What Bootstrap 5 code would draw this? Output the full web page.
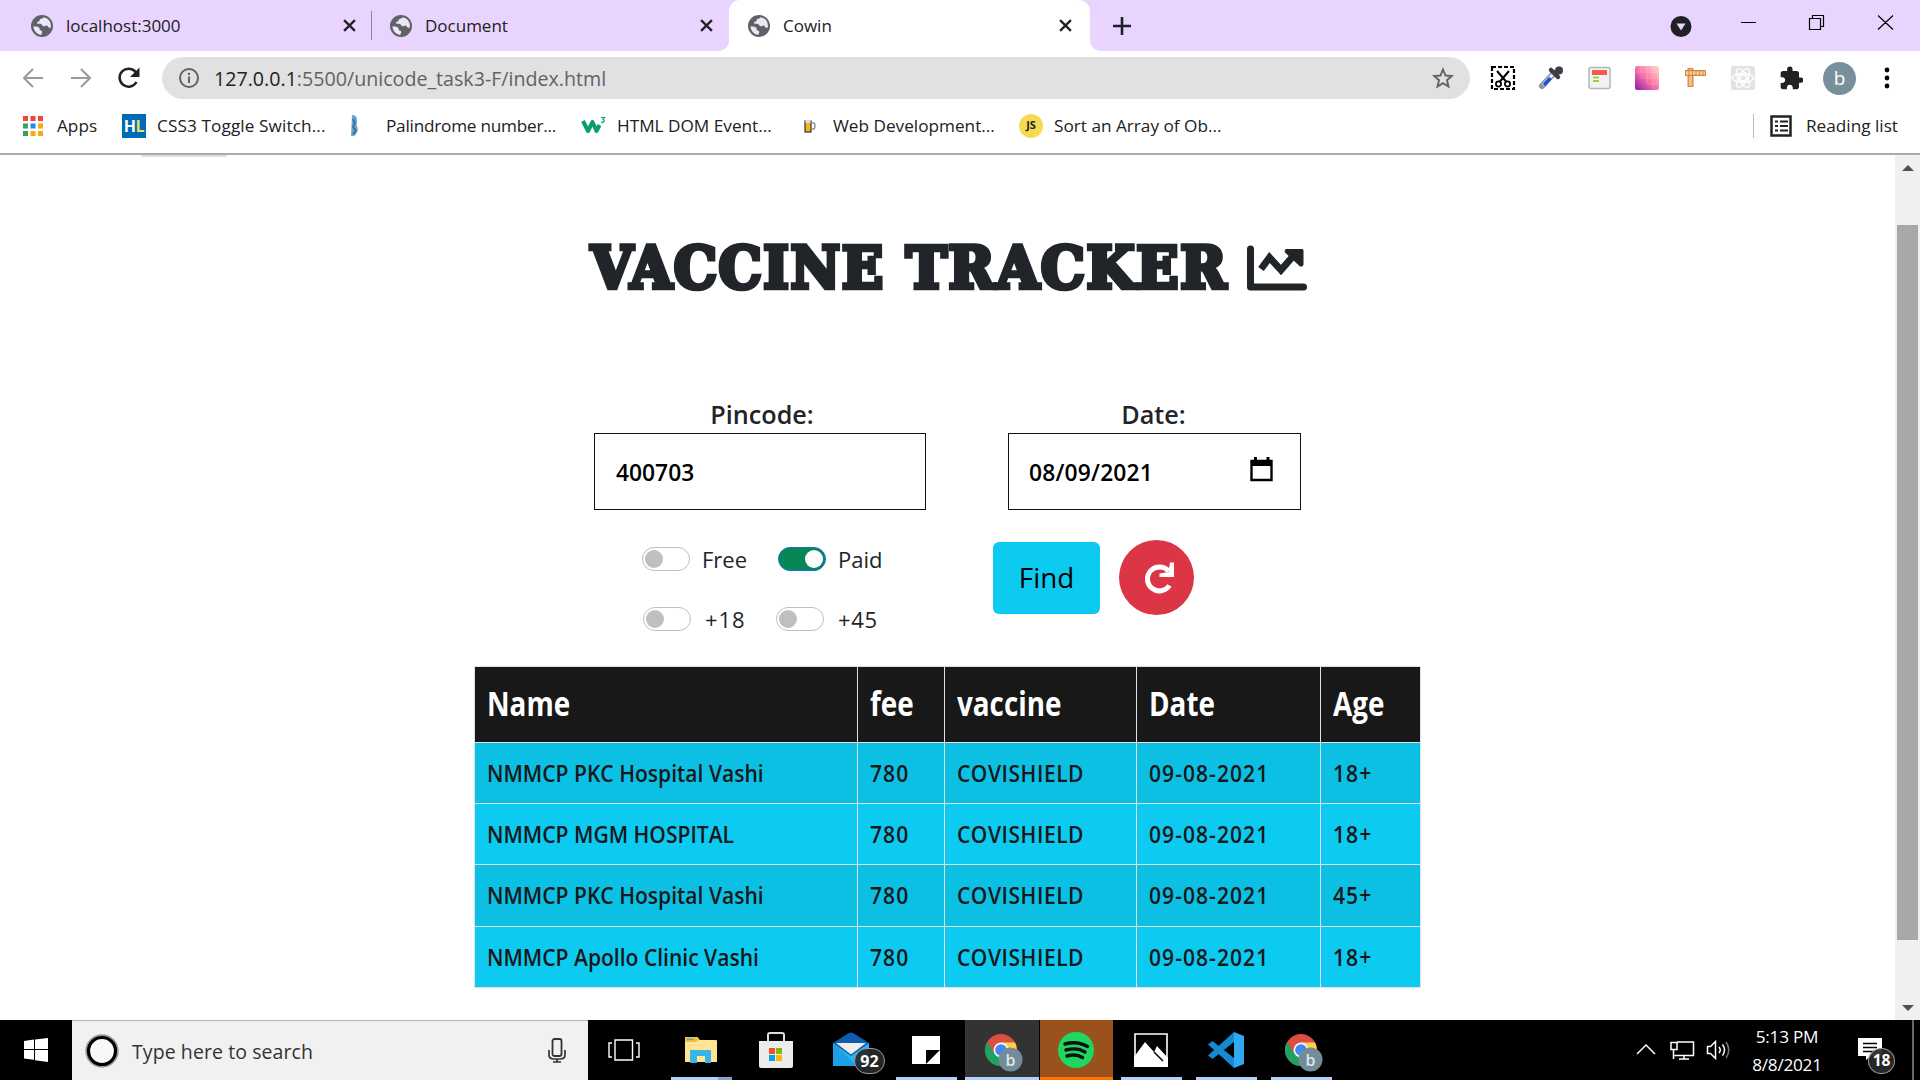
<!DOCTYPE html>
<html lang="en">
<head>
<meta charset="utf-8">
<title>Cowin</title>
<link href="https://cdn.jsdelivr.net/npm/bootstrap@5.3.0/dist/css/bootstrap.min.css" rel="stylesheet">
<style>
body{width:1920px;height:1080px;overflow:hidden;font-family:"Open Sans","Noto Sans",sans-serif;color:#202124;background:#fff}
svg{display:block;flex:none}
.tabstrip{height:51px;background:#e8d4ff;font-size:17px;padding-left:10px}
.tabitem{height:51px;width:357px;padding:0 16px 0 18px;flex:none}
.tabitem.first{width:362px;padding-left:21px;background:linear-gradient(#8f8599,#8f8599) right 0 center/1.5px 29px no-repeat}
.tabitem.on{background:#fff;border-radius:11px 11px 0 0;width:361px;padding:0 18px 0 19px;position:relative}
.tabitem.on::before,.tabitem.on::after{content:"";position:absolute;bottom:0;width:10px;height:10px}
.tabitem.on::before{left:-10px;background:radial-gradient(circle at 0 0,transparent 9.5px,#fff 10px)}
.tabitem.on::after{right:-10px;background:radial-gradient(circle at 100% 0,transparent 9.5px,#fff 10px)}
.tabitem span{margin-left:13px}
.toolbar{height:54px}
.omni{width:1308px;height:42px;border-radius:21px;background:#e1e1e1;font-size:19.65px;color:#5f6368;padding:0 16px;margin-left:21px}
.omni span{padding-top:1px;margin-left:14px}
.omni b{font-weight:400;color:#202124}
.ava{width:33px;height:33px;border-radius:50%;background:#78909c;color:#fff;font-size:19px}
.bookmarks{height:50px;font-size:17.2px;padding:0 22px 7px 23px;border-bottom:2px solid #ababab}
.bm{flex:none}
.hl{width:24px;height:24px;background:#006cb5;color:#fff;font-weight:700;font-size:16px;line-height:24px;text-align:center;letter-spacing:-.5px}
.hl i{font-style:normal;color:#ebe15c}
.js{width:24px;height:24px;border-radius:50%;background:#f7da52;font-weight:700;font-size:11px}
.viewport{height:865px}
.content{width:1895px}
.scroller{width:25px;background:#f0f0f0;padding:10px 0 9px}
.thumb{width:21px;height:715px;background:#a8a8a8;margin-top:54px}
.stub{width:86px;height:2px;background:#ddd;border-radius:0 0 4px 4px;margin-left:141px}
.tracker{width:947px;margin-left:474px}
.ttl text{font-family:"DejaVu Serif Condensed","DejaVu Serif",serif;font-weight:700;font-size:57.500px;letter-spacing:2px;fill:#212529;stroke:#212529;stroke-width:4.6px}
.lbl{font-size:25.2px;font-weight:600;line-height:38px;color:#212529}
.field{border:1.5px solid #111;height:77px;padding:4px 21px 0;font-size:22.8px;font-weight:600;color:#000}
.sw{width:48px;height:24px;border:1.5px solid #bfbfbf;border-radius:12px;padding:2px;flex:none}
.sw::before{content:"";display:block;width:18px;height:18px;border-radius:50%;background:#bfbfbf}
.sw.on{background:#078656;border-color:#1a6edc;padding-left:26px}
.sw.on::before{background:#fff}
.opt{font-size:22px;color:#212529;height:30px}
.opt span+span:not(.sw){padding-top:1px}
.findbtn{width:107px;height:72px;border-radius:6px;background:#0dcaf0;color:#000;font-size:27.8px;border:0;padding:0;margin-top:2px}
.resetbtn{width:75px;height:75px;border-radius:50%;background:#dc3545;border:0;padding:0;margin-left:19px}
.slots{width:947px;table-layout:fixed;border-collapse:collapse;margin:0;--bs-table-bg:transparent}
.slots th,.slots td{border:1.5px solid #dee2e6;padding:0 0 0 12px;vertical-align:middle;white-space:nowrap;box-shadow:none}
.slots th{background:#181818;color:#fff;height:75.5px;font-size:33.5px;font-weight:700;padding-bottom:2px}
.slots td{background:#0dcaf0;color:#17181a;height:61.4px;font-size:24.2px;font-weight:600}
.slots tr:nth-child(odd) td{background:#0cc0e4}
.slots span{display:inline-block;transform:scaleX(.87);transform-origin:0 50%}
.slots th span{transform:scaleX(.83)}
.slots td:nth-child(n+2) span{letter-spacing:1.2px}
.slots td:nth-child(3) span{letter-spacing:.6px}
.taskbar{height:60px;background:#000;color:#fff}
.search{width:516px;height:60px;background:#f1f1f1;border-top:1px solid #b5b5b5;color:#333;font-size:19.5px;padding:0 22px 0 13px}
.app{height:60px;flex:none;position:relative;display:flex;align-items:center;justify-content:center}
.app.run::after{content:"";position:absolute;left:0;right:0;bottom:0;height:3px;background:#b3d0f8}
.app.multi::after{background:linear-gradient(90deg,#b3d0f8 47px,#8aa3c4 47px)}
.count{position:absolute;border:1.5px solid #999;border-radius:50%;background:#262a2cee;color:#fff;font-weight:700;display:flex;align-items:center;justify-content:center}
.clock{font-size:17.2px;line-height:28px;letter-spacing:-.25px}
</style>
</head>
<body>
<svg width="0" height="0" class="position-absolute">
<defs>
<symbol id="globe" viewBox="2 2 20 20"><path fill="#5f6368" d="M12 2a10 10 0 1 0 0 20 10 10 0 0 0 0-20z"/><path fill="#eee5f8" d="M4.2 12.2c1.8.2 4.2.1 5.3 1.3.8.9-.2 1.7.8 2.3 1.400.6 2.200.7 1.800 2.300-.3 1-.8 1.300-.9 2.100A8.200 8.200 0 0 1 4.200 12.200zM13 4c-.2 1.500-1.500 1.200-2.500 1.700-1 .6-.2 1.800-1.500 2.300-1 .4-1.600.4-1.500 1.400.2 1 1.800.5 3 .6 1.800.1 1.500 1.900 3 2.200 1.400.3 1.800-1 3-.6 1 .4.8 1.700 2 1.900.5.1 1 0 1.500-.2C20.800 8.500 17.600 4.500 13 4z"/></symbol>
<symbol id="cross" viewBox="0 0 12 12"><path d="M1 1l10 10M11 1L1 11" stroke="#202124" stroke-width="2.100"/></symbol>
<symbol id="chrome" viewBox="0 0 40 40"><circle cx="17" cy="17" r="16" fill="#dc4e41"/><path d="M3.100 9A16 16 0 0 0 17 33l7-12-14-1z" fill="#1da261"/><path d="M17 9.500h14A16 16 0 0 1 17 33l7-12z" fill="#ffcf48"/><circle cx="17" cy="17" r="7.500" fill="#f5f5f5"/><circle cx="17" cy="17" r="5.800" fill="#4688f1"/><circle cx="26.500" cy="26.500" r="12" fill="#748c99"/><text x="26.500" y="32.500" text-anchor="middle" font-family="Open Sans" font-size="16" font-weight="600" fill="#dfe6ea">b</text></symbol>
</defs></svg>

<header>
<div class="tabstrip d-flex align-items-center">
  <div class="tabitem first d-flex align-items-center"><svg width="22" height="22"><use href="#globe"/></svg><span class="me-auto">localhost:3000</span><svg width="13" height="13"><use href="#cross"/></svg></div>
  <div class="tabitem d-flex align-items-center"><svg width="22" height="22"><use href="#globe"/></svg><span class="me-auto">Document</span><svg width="13" height="13"><use href="#cross"/></svg></div>
  <div class="tabitem on d-flex align-items-center"><svg width="22" height="22"><use href="#globe"/></svg><span class="me-auto">Cowin</span><svg width="13" height="13"><use href="#cross"/></svg></div>
  <svg width="18" height="18" style="margin-left:23px"><path d="M9 0v18M0 9h18" stroke="#202124" stroke-width="2.600"/></svg>
  <svg width="228" height="30" viewBox="1670 10 228 30" class="ms-auto" style="margin-right:22px"><circle cx="1681" cy="25.500" r="10.500" fill="#202124"/><path d="M1676.500 22.500h9l-4.500 7z" fill="#e8d4ff"/><path d="M1741 21.500h15M1809.500 17.500h11v11h-11zM1812.500 17v-2.500h11v11h-2.500M1878 14.500l15 14M1893 14.500l-15 14" stroke="#000" stroke-width="1.200" fill="none"/></svg>
</div>
<div class="toolbar d-flex align-items-center">
  <svg width="118" height="24" viewBox="23 66 118 24" style="margin-left:23px"><path d="M43 78H25M33 69l-9 9 9 9M71 78h18M81 69l9 9-9 9" stroke="#9a9a9a" stroke-width="2" fill="none"/><path d="M136 72.500A9 9 0 1 0 136.500 82" stroke="#202124" stroke-width="2.500" fill="none"/><path d="M139.500 67.500v9.500h-9.500z" fill="#202124"/></svg>
  <div class="omni d-flex align-items-center"><svg width="22" height="22"><circle cx="11" cy="11" r="9" stroke="#5f6368" stroke-width="2" fill="none"/><path d="M11 9.500V16M11 5.800V8" stroke="#5f6368" stroke-width="2"/></svg><span class="me-auto"><b>127.0.0.1</b>:5500/unicode_task3-F/index.html</span><svg width="22" height="22" viewBox="0 0 22 22"><path d="M11 2.500l2.500 6 6.300.5-4.800 4.200 1.500 6.300-5.500-3.400-5.500 3.400L7 13.200 2.200 9l6.300-.5z" fill="none" stroke="#5f6368" stroke-width="1.900"/></svg></div>
  <svg width="315" height="30" viewBox="1488 63 315 30" style="margin-left:18px">
    <path d="M1492 67h22v22h-22z" fill="none" stroke="#000" stroke-width="2.200" stroke-dasharray="4 2"/><path d="M1497 71l9.500 11M1509 71l-9.500 11" stroke="#000" stroke-width="2"/><circle cx="1498.500" cy="84" r="2.600" fill="none" stroke="#000" stroke-width="1.700"/><circle cx="1507.500" cy="84" r="2.600" fill="none" stroke="#000" stroke-width="1.700"/>
    <path d="M1542 86l12-13" stroke="#8d949c" stroke-width="6" stroke-linecap="round"/><path d="M1543 85l10-11" stroke="#e9eef6" stroke-width="3"/><path d="M1544 85l6.500-7" stroke="#244fd6" stroke-width="3.600"/><path d="M1551 70l7 7M1556 74l4-5" stroke="#3b3f44" stroke-width="4.500" stroke-linecap="round"/><circle cx="1559" cy="70.500" r="4" fill="#3b3f44"/>
    <rect x="1589" y="67.500" width="21" height="21" rx="2" fill="#f2f2f2" stroke="#b6b6b6" stroke-width="1.500"/><path d="M1592 72.500h15" stroke="#f45b50" stroke-width="5"/><path d="M1593 77.500h6M1593 81h6" stroke="#93d43b" stroke-width="2.200"/>
    <defs><linearGradient id="pg" x1="0" y1="1" x2="1" y2="0"><stop offset="0" stop-color="#8c1ba5"/><stop offset=".5" stop-color="#ff73aa"/><stop offset="1" stop-color="#ffdcc8"/></linearGradient></defs><rect x="1635" y="66" width="24" height="24" rx="2" fill="url(#pg)"/><path d="M1641 66v12M1647 66v18M1653 66v24M1635 72h24M1641 78h18M1647 84h12" stroke="#fff" stroke-opacity=".18"/>
    <path d="M1690.500 68v19" stroke="#cf8744" stroke-width="6"/><path d="M1690.500 69v17" stroke="#f3c283" stroke-width="3.500"/><path d="M1685 73h21" stroke="#cf8744" stroke-width="6"/><path d="M1686 73h19" stroke="#f9cf98" stroke-width="3.500" stroke-dasharray="2.500 1"/>
    <rect x="1731" y="66" width="24" height="24" rx="2" fill="#e2e2e2"/><g fill="none" stroke="#fff" stroke-width="1.300"><ellipse cx="1743" cy="78" rx="10.500" ry="4.500"/><ellipse cx="1743" cy="78" rx="10.500" ry="4.500" transform="rotate(60 1743 78)"/><ellipse cx="1743" cy="78" rx="10.500" ry="4.500" transform="rotate(120 1743 78)"/><circle cx="1743" cy="78" r="3"/></g>
    <path transform="translate(1778.500 65.500) scale(1.080)" fill="#202124" d="M20.500 11H19V7c0-1.100-.9-2-2-2h-4V3.500a2.500 2.500 0 0 0-5 0V5H4c-1.100 0-2 .9-2 2v3.800h1.500c1.500 0 2.700 1.200 2.700 2.700s-1.200 2.700-2.700 2.700H2V20c0 1.100.9 2 2 2h3.800v-1.500c0-1.500 1.200-2.700 2.700-2.700s2.700 1.200 2.700 2.700V22H17c1.100 0 2-.9 2-2v-4h1.500a2.500 2.500 0 0 0 0-5z"/>
  </svg>
  <div class="ava d-flex justify-content-center align-items-center" style="margin-left:20px">b</div>
  <svg width="6" height="22" style="margin-left:28px"><circle cx="3" cy="3" r="2.400"/><circle cx="3" cy="11" r="2.400"/><circle cx="3" cy="19" r="2.400"/></svg>
</div>
<div class="bookmarks d-flex align-items-center">
  <svg class="bm" width="20" height="20"><path fill="#f4433c" d="M0 0h5v5H0zM7.500 0h5v5h-5zM15 0h5v5h-5z"/><path fill="#32a25c" d="M0 7.500h5v5H0zM0 15h5v5H0z"/><path fill="#1e88f5" d="M7.500 7.500h5v5h-5z"/><path fill="#f9ab0d" d="M15 7.500h5v5h-5zM7.500 15h5v5h-5zM15 15h5v5h-5z"/></svg>
  <span class="bm" style="width:65px;margin-left:14px">Apps</span>
  <span class="bm hl">H<i>L</i></span><span class="bm" style="width:192px;margin-left:11px;letter-spacing:.1px">CSS3 Toggle Switch...</span>
  <svg width="24" height="24" class="bm"><path d="M3 1q5 0 5 5 0 3-.5 5 2.500 4 0 8Q6 23 2 22z" fill="#6ba6d0"/><path d="M4 5l2 4-2 4 3 4-3 3" stroke="#22618f" stroke-width="2" stroke-opacity=".7" fill="none"/></svg>
  <span class="bm" style="width:195px;margin-left:13px;letter-spacing:-.23px">Palindrome number...</span>
  <svg width="25" height="20" class="bm"><path d="M2 5l5 10 4.500-9 4 9 3-6" fill="none" stroke="#089f6a" stroke-width="4" stroke-linejoin="round"/><path d="M20 1.500h3.500l-1.500 2q2.500 1 0 3l-2-.5" fill="none" stroke="#089f6a" stroke-width="1.200"/></svg>
  <span class="bm" style="width:187px;margin-left:11px">HTML DOM Event...</span>
  <svg width="12" height="14" class="bm"><rect x="1" y="2" width="6" height="11" fill="#f3b517" stroke="#333" stroke-width="1.200"/><path d="M1.500 2.500h5" stroke="#ddd" stroke-width="3"/><path d="M8 4q3-1 3 3t-3 3" fill="none" stroke="#777" stroke-width="1.200"/></svg>
  <span class="bm" style="width:186px;margin-left:17px">Web Development...</span>
  <span class="bm js d-flex align-items-center justify-content-center">JS</span><span class="bm" style="margin-left:11px">Sort an Array of Ob...</span>
  <svg width="40" height="24" viewBox="1754 114 40 24" class="ms-auto"><path d="M1754.500 114v24" stroke="#bbb"/><path d="M1772.500 116.500h19v19h-19z" fill="none" stroke="#222" stroke-width="2.500"/><path d="M1776 121.500h3M1776 126h3M1776 130.500h3M1781 121.500h8M1781 126h8M1781 130.500h8" stroke="#222" stroke-width="2.200"/></svg>
  <span style="margin-left:13px">Reading list</span>
</div>
</header>

<main class="viewport d-flex">
<div class="content">
  <div class="stub"></div>
  <div class="tracker">
    <svg class="ttl" width="947" height="90" viewBox="474 220 947 90" style="margin-top:63px" role="img" aria-label="Vaccine tracker"><text y="288"><tspan x="591" textLength="294" lengthAdjust="spacingAndGlyphs">VACCINE</tspan></text><text y="288"><tspan x="906" textLength="322" lengthAdjust="spacingAndGlyphs">TRACKER</tspan></text><path d="M1250.500 249v38h53" fill="none" stroke="#212529" stroke-width="7" stroke-linejoin="round" stroke-linecap="round"/><path d="M1261 269l8.500-11.500 11.500 12.500 14-16" fill="none" stroke="#212529" stroke-width="7"/><path d="M1286 249h16q1.500 0 1.500 1.500V265q-2 3-4 1l-14-13q-2-2.500.5-4z" fill="#212529"/></svg>
    <div class="d-flex" style="margin:85px 120px 0">
      <div style="width:332px"><div class="lbl text-center" style="padding-left:4px">Pincode:</div><div class="field d-flex align-items-center">400703</div></div>
      <div style="width:293px;margin-left:82px"><div class="lbl text-center" style="padding-right:2px">Date:</div><div class="field d-flex align-items-center justify-content-between" style="padding-right:26px;padding-left:20px;letter-spacing:.2px">08/09/2021<svg width="24" height="25" style="margin-top:-8px"><path d="M1.500 4h20v19h-20z" fill="none" stroke="#000" stroke-width="2.400"/><path d="M1 3h21v6H1zM4 0h3v4H4zM16.500 0h3v4h-3z"/></svg></div></div>
    </div>
    <div class="d-flex align-items-start" style="margin:30px 0 0 168px;height:94px">
      <div style="width:351px;padding-top:4px">
        <div class="d-flex opt align-items-center"><span class="sw"></span><span style="width:76px;margin-left:12px">Free</span><span class="sw on"></span><span style="margin-left:12px">Paid</span></div>
        <div class="d-flex opt align-items-center" style="margin-top:30px"><span class="sw" style="margin-left:1px"></span><span style="width:71px;margin-left:14px;letter-spacing:.9px">+18</span><span class="sw"></span><span style="margin-left:14px;letter-spacing:.7px">+45</span></div>
      </div>
      <button class="btn findbtn">Find</button>
      <button class="btn resetbtn"><svg width="75" height="75" viewBox="1119 540 75 75"><path d="M1168.500 571a12 12 0 1 0 1 14.500" fill="none" stroke="#fff" stroke-width="5"/><path d="M1174 562.500V577h-14.500v-3.500l9-1.500 1.500-9.500z" fill="#fff"/></svg></button>
    </div>
    <table class="table slots" style="margin-top:32px">
      <colgroup><col style="width:382.500px"><col style="width:87px"><col style="width:192.500px"><col style="width:183.500px"><col></colgroup>
      <thead><tr><th><span>Name</span></th><th><span>fee</span></th><th><span>vaccine</span></th><th><span>Date</span></th><th><span>Age</span></th></tr></thead>
      <tbody>
      <tr><td><span>NMMCP PKC Hospital Vashi</span></td><td><span>780</span></td><td><span>COVISHIELD</span></td><td><span>09-08-2021</span></td><td><span>18+</span></td></tr>
      <tr><td><span>NMMCP MGM HOSPITAL</span></td><td><span>780</span></td><td><span>COVISHIELD</span></td><td><span>09-08-2021</span></td><td><span>18+</span></td></tr>
      <tr><td><span>NMMCP PKC Hospital Vashi</span></td><td><span>780</span></td><td><span>COVISHIELD</span></td><td><span>09-08-2021</span></td><td><span>45+</span></td></tr>
      <tr><td><span>NMMCP Apollo Clinic Vashi</span></td><td><span>780</span></td><td><span>COVISHIELD</span></td><td><span>09-08-2021</span></td><td><span>18+</span></td></tr>
      </tbody>
    </table>
  </div>
</div>
<div class="scroller d-flex flex-column align-items-center"><svg width="12" height="6"><path d="M0 6l6-6 6 6z" fill="#505050"/></svg><div class="thumb"></div><svg width="12" height="6" class="mt-auto"><path d="M0 0h12l-6 6z" fill="#505050"/></svg></div>
</main>

<footer class="taskbar d-flex align-items-center">
  <div class="app" style="width:72px"><svg width="24" height="24"><path fill="#fff" d="M0 3l10-1.400V11H0zM11 1.400L24 0v11H11zM0 12h10v9.800L0 20.500zM11 12h13v12l-13-1.700z"/></svg></div>
  <div class="search d-flex align-items-center"><svg width="34" height="34"><circle cx="17" cy="17" r="15.500" fill="none" stroke="#999" stroke-width="2.500"/><circle cx="17" cy="17" r="13.500" fill="#f8f8f8" stroke="#000" stroke-width="3.200"/></svg><span class="me-auto" style="margin-left:13px;padding-top:2px;letter-spacing:.08px">Type here to search</span><svg width="18" height="25"><rect x="4.500" y="1" width="9" height="17" rx="2" fill="none" stroke="#333" stroke-width="1.800"/><path d="M1 12v5q0 4 5 4h6q5 0 5-4v-5M9 21v3M5 24h8" fill="none" stroke="#333" stroke-width="1.700"/></svg></div>
  <div class="app" style="width:72px"><svg width="32" height="22"><path d="M7 1h17.500v20H7zM4 4H1v14h3M28 4h3v14h-3" fill="none" stroke="#fff" stroke-width="1.400"/></svg></div>
  <div class="app run multi" style="width:61px;margin-left:11px"><svg width="32" height="28" style="margin-left:-2px"><path d="M0 2q0-1 1-1h11l3 3h16q1 0 1 1v21H0z" fill="#ffe593"/><path d="M0 2q0-1 1-1h12l1 3-3 2H0z" fill="#f7c02e"/><path d="M2 3.500h7" stroke="#5ba9c8" stroke-width="1.500"/><path d="M5 14h21v13h-6v-7h-8v7H5z" fill="#38b4ea"/></svg></div>
  <div class="app" style="width:88px"><svg width="36" height="38"><path d="M10 12V4q0-2 2-2h12q2 0 2 2v8" fill="none" stroke="#ddd" stroke-width="2"/><path d="M1 10h34v25q0 2-2 2H3q-2 0-2-2z" fill="#ececec"/><path fill="#f25022" d="M11 17h6v6h-6z"/><path fill="#7fba00" d="M18 17h6v6h-6z"/><path fill="#00a4ef" d="M11 24h6v6h-6z"/><path fill="#ffb900" d="M18 24h6v6h-6z"/></svg></div>
  <div class="app" style="width:62px"><svg width="36" height="36"><path d="M0 11L16 1q2-1 4 0l16 10v22H0z" fill="#0f5bb0"/><path d="M0 11l18 13 18-13v23H0z" fill="#28b4ee"/><path d="M0 11l24 23H0z" fill="#1c9fe6"/><path d="M3 11h30L18 22.500z" fill="#eee"/></svg><span class="count" style="left:34px;top:28px;width:31px;height:26px;border-radius:13px;font-size:16px">92</span></div>
  <div class="app run" style="width:61px;margin-left:14px"><svg width="28" height="28" style="margin-left:-2px"><path fill="#fff" d="M0 0h28v28H0z"/><path d="M14 28V14h14z" fill="#000"/><path d="M15.500 28L28 15.500V28z" fill="#fff"/></svg></div>
  <div class="app run" style="width:74px;margin-left:8px;background:#333"><svg width="40" height="40" style="margin-left:3px;margin-top:5px"><use href="#chrome"/></svg></div>
  <div class="app" style="width:73px;margin-left:1px;background:#9a521c;border-bottom:3px solid #ff7500;padding-top:3px"><svg width="36" height="36" style="margin-left:-2px"><circle cx="18" cy="18" r="18" fill="#1ed760"/><path d="M7 12q12-3.500 22.500 2.500M8 18q11-3 19 2M9 24q9-2.500 15.500 1.500" fill="none" stroke="#111" stroke-width="3.400" stroke-linecap="round"/></svg></div>
  <div class="app run" style="width:61px;margin-left:8px"><svg width="34" height="34" style="margin-left:-1px"><path d="M1 1h32v32H1z" fill="#000" stroke="#fff" stroke-width="1.600"/><path d="M0 24L11 9l9 10 3-6 11 12v9H0z" fill="#fff"/><path d="M20 19l9 9" stroke="#000" stroke-width="1.500"/></svg></div>
  <div class="app run" style="width:61px;margin-left:14px"><svg width="36" height="36" viewBox="0 0 36 36" style="margin-left:-2px"><path d="M26 0l10 4v28l-10 4z" fill="#30a9f2"/><path d="M26 0v10L4.500 27 0 23.500z" fill="#1489d0"/><path d="M0 12.500L4.500 9 26 26v10z" fill="#1789d3"/></svg></div>
  <div class="app run" style="width:61px;margin-left:14px"><svg width="40" height="40" style="margin-left:4px;margin-top:5px"><use href="#chrome"/></svg></div>
  <svg width="94" height="24" viewBox="1636 1038 94 24" class="ms-auto"><g fill="none" stroke="#fff" stroke-width="1.500"><path d="M1637 1054l9-9 9 9M1677 1042h16.500v13.500h-19M1671 1042.500h6v7h-6zM1673.500 1050v9M1684 1056v3M1679 1059h10M1707.500 1046.500h3l5-5v17l-5-5h-3zM1719 1047q2.500 3 0 6M1722.500 1044.500q4 5.500 0 11"/><path d="M1726 1042q5.500 8 0 16" stroke="#777"/></g></svg>
  <div class="clock text-center" style="width:74px;margin-left:20px;padding-top:1px">5:13 PM<br>8/8/2021</div>
  <div class="app" style="width:40px;margin-left:28px"><svg width="24" height="24" style="margin:-1px 4px 0 0"><path d="M0 0h24v18H13l-5 4v-4H0z" fill="#fff"/><path d="M5 5.500h14M5 9.500h14M5 13.500h14" stroke="#000" stroke-width="1.300"/></svg><span class="count" style="left:16px;top:28px;width:27px;height:26px;font-size:15.500px">18</span></div>
  <div style="width:2px;height:60px;background:#666;margin:0 6px 0 20px"></div>
</footer>
<script src="https://cdn.jsdelivr.net/npm/bootstrap@5.3.0/dist/js/bootstrap.bundle.min.js"></script>
</body>
</html>
